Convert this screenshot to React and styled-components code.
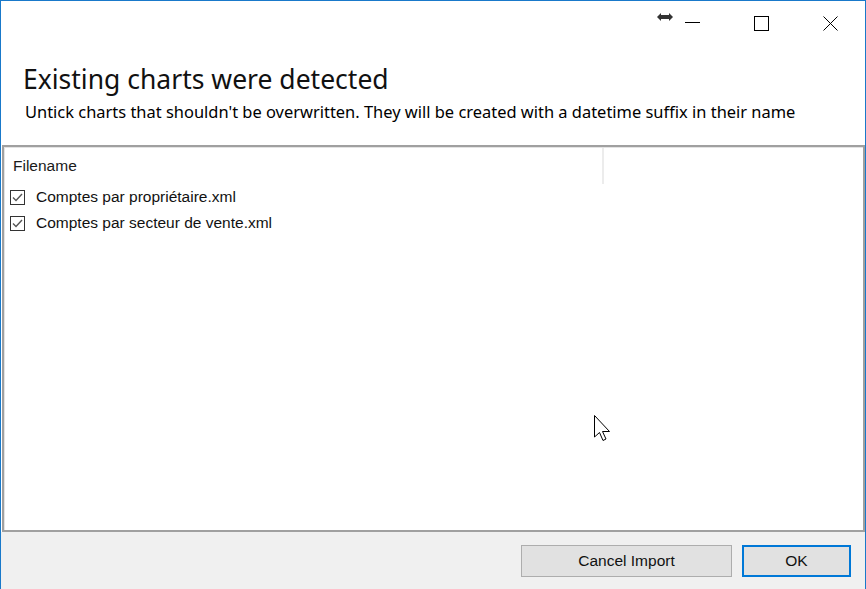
import React from 'react';
import styled, { createGlobalStyle } from 'styled-components';

const Global = createGlobalStyle`
  html, body { margin: 0; padding: 0; background: #ffffff; }
  #root { width: 866px; height: 589px; }
`;

const Window = styled.div`
  position: relative;
  box-sizing: border-box;
  width: 866px;
  height: 589px;
  border: 1px solid #1979ca;
  border-bottom: none;
  background: #ffffff;
  display: flex;
  flex-direction: column;
  font-family: 'Liberation Sans', Arial, sans-serif;
  color: #000;
  overflow: hidden;
`;

const TitleBar = styled.div`
  height: 45px;
  display: flex;
  justify-content: flex-end;
  flex-shrink: 0;
`;

const CaptionButton = styled.div`
  width: 69px;
  height: 45px;
  display: flex;
  align-items: center;
  justify-content: center;
`;

const ResizeGlyph = styled.div`
  position: absolute;
  left: 655px;
  top: 9px;
  width: 18px;
  height: 14px;
`;

const Heading = styled.div`
  padding: 17px 0 0 22px;
  height: 99px;
  box-sizing: border-box;
  flex-shrink: 0;
`;

const Title = styled.h1`
  margin: 0;
  font-family: 'Noto Sans', 'Open Sans', sans-serif;
  font-weight: 400;
  font-size: 26.5px;
  line-height: 32px;
  color: #111;
`;

const Subtitle = styled.p`
  margin: 8px 0 0 2px;
  font-family: 'Noto Sans', 'Open Sans', sans-serif;
  font-weight: 400;
  font-size: 16.45px;
  line-height: 18px;
  color: #000;
  white-space: nowrap;
`;

const ListBox = styled.div`
  flex: 1;
  margin-left: 1px;
  border: 2px solid #a0a0a0;
  box-shadow: inset 1px 1px 0 #e3e3e3;
  background: #fff;
  display: flex;
  flex-direction: column;
`;

const HeaderRow = styled.div`
  display: flex;
  height: 37px;
  align-items: center;
  flex-shrink: 0;
`;

const HeaderCell = styled.div`
  width: ${p => p.$w}px;
  height: 36px;
  box-sizing: border-box;
  padding-left: ${p => p.$pad}px;
  display: flex;
  align-items: center;
  font-size: 15.5px;
  color: #1a1a1a;
  border-right: ${p => (p.$divider ? '2px solid #ececec' : 'none')};
`;

const Row = styled.label`
  display: flex;
  align-items: center;
  height: 26px;
  padding-left: 6px;
  gap: 11px;
  font-size: 15.5px;
  color: #111;
`;

const Footer = styled.div`
  height: 57px;
  flex-shrink: 0;
  background: #f0f0f0;
  display: flex;
  justify-content: flex-end;
  align-items: flex-start;
  padding: 13px 14px 0 0;
  box-sizing: border-box;
  gap: 10px;
`;

const Button = styled.button`
  width: ${p => p.$w}px;
  height: 32px;
  box-sizing: border-box;
  background: #e1e1e1;
  border: ${p => (p.$default ? '2px solid #0078d7' : '1px solid #adadad')};
  font-family: 'Liberation Sans', Arial, sans-serif;
  font-size: 15.5px;
  color: #111;
  padding: 0;
`;

const Cursor = styled.svg`
  position: absolute;
  left: 592px;
  top: 413px;
`;

const CheckBox = () => (
  <svg width="15" height="15" viewBox="0 0 15 15">
    <rect x="0.5" y="0.5" width="14" height="14" fill="#fff" stroke="#333" />
    <path d="M3 7.5 L6 10.5 L12 4" fill="none" stroke="#555" strokeWidth="1.4" />
  </svg>
);

const files = ['Comptes par propriétaire.xml', 'Comptes par secteur de vente.xml'];

export default function App() {
  return (
    <>
      <Global />
      <Window>
        <ResizeGlyph>
          <svg width="18" height="14" viewBox="0 0 18 14">
            <path d="M1 7 L5 3 L5 5 L13 5 L13 3 L17 7 L13 11 L13 9 L5 9 L5 11 Z" fill="#333" />
          </svg>
        </ResizeGlyph>
        <TitleBar>
          <CaptionButton>
            <svg width="15" height="15" viewBox="0 0 15 15">
              <path d="M0 6.5 H15" stroke="#000" strokeWidth="1" />
            </svg>
          </CaptionButton>
          <CaptionButton>
            <svg width="15" height="15" viewBox="0 0 15 15">
              <rect x="0.5" y="0.5" width="14" height="14" fill="none" stroke="#000" />
            </svg>
          </CaptionButton>
          <CaptionButton>
            <svg width="15" height="15" viewBox="0 0 15 15">
              <path d="M0.5 0.5 L14.5 14.5 M14.5 0.5 L0.5 14.5" stroke="#000" strokeWidth="1" />
            </svg>
          </CaptionButton>
        </TitleBar>
        <Heading>
          <Title>Existing charts were detected</Title>
          <Subtitle>Untick charts that shouldn't be overwritten. They will be created with a datetime suffix in their name</Subtitle>
        </Heading>
        <ListBox>
          <HeaderRow>
            <HeaderCell $w={600} $pad={9} $divider>Filename</HeaderCell>
          </HeaderRow>
          {files.map(f => (
            <Row key={f}>
              <CheckBox />
              {f}
            </Row>
          ))}
        </ListBox>
        <Footer>
          <Button $w={211}>Cancel Import</Button>
          <Button $w={109} $default>OK</Button>
        </Footer>
        <Cursor width="20" height="30" viewBox="0 0 20 30">
          <path d="M1.5 1.5 L1.5 23 L6.5 18.5 L10 26.5 L13 25 L9.5 17.5 L16.5 17.5 Z" fill="#fff" stroke="#000" strokeWidth="1" />
        </Cursor>
      </Window>
    </>
  );
}
